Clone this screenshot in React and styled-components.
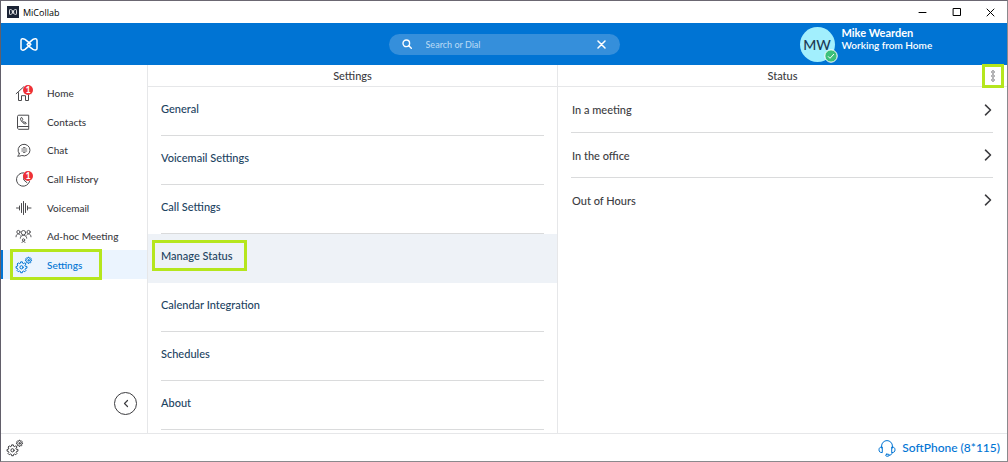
import React, { useState } from 'react';
import styled, { ThemeProvider, createGlobalStyle, css } from 'styled-components';

const theme = {
  blue: '#0074d4',
  blueSoft: '#358fdb',
  navy: '#1c435f',
  text: '#3c3c3f',
  icon: '#4a4a4d',
  line: '#e6e7e9',
  lineDark: '#dadbdc',
  lime: '#b5e61d',
  red: '#ee3136',
  selected: '#ebf4fe',
  selectedRow: '#eef2f7',
  font: 'Lato, "Open Sans", sans-serif',
};

const GlobalStyle = createGlobalStyle`
  body {
    margin: 0;
    font-family: ${theme.font};
    font-size: 11px;
    font-weight: 500;
    color: ${theme.text};
    background: #fff;
  }
  *, *::before, *::after {
    box-sizing: border-box;
  }
  button, input {
    font: inherit;
    color: inherit;
  }
  button {
    padding: 0;
    border: 0;
    background: none;
    cursor: pointer;
  }
`;

const Window = styled.div`
  display: flex;
  flex-direction: column;
  min-height: 100vh;
  border: 1px solid #8a898d;
  border-top-color: #6b6772;
  border-left-color: #625f6a;
`;

const TitleBar = styled.div`
  display: flex;
  align-items: center;
  height: 22px;
  padding-left: 6px;
  color: #000;
`;

const AppBadge = styled.span`
  display: flex;
  align-items: center;
  justify-content: center;
  width: 12px;
  height: 12px;
  margin-right: 4px;
  background: #1b2335;
`;

const WindowTitle = styled.span`
  flex: 1;
  font-family: "Open Sans", sans-serif;
  font-size: 9px;
`;

const WindowButton = styled.button`
  display: flex;
  align-items: center;
  justify-content: center;
  width: 34px;
  height: 22px;
`;

const Header = styled.header`
  display: grid;
  grid-template-columns: 1fr 231px 1fr;
  align-items: center;
  height: 42px;
  background: ${({ theme }) => theme.blue};
  color: #fff;
`;

const LogoLink = styled.a`
  display: flex;
  margin-left: 19px;
  color: #fff;
`;

const Search = styled.label`
  display: flex;
  align-items: center;
  height: 21px;
  padding: 0 14px 0 13px;
  border-radius: 11px;
  background: ${({ theme }) => theme.blueSoft};
`;

const SearchInput = styled.input`
  flex: 1;
  min-width: 0;
  margin-left: 14px;
  padding: 0;
  border: 0;
  outline: 0;
  background: none;
  font-size: 9px;

  &::placeholder {
    color: #b4d8f5;
    opacity: 1;
  }
`;

const ClearButton = styled.button`
  display: flex;
`;

const Profile = styled.div`
  display: flex;
  gap: 7px;
  margin-left: 180px;
`;

const Avatar = styled.div`
  position: relative;
  display: flex;
  align-items: center;
  justify-content: center;
  width: 35px;
  height: 35px;
  border-radius: 50%;
  background: #a2effd;
  color: #1c3a55;
  font-size: 14px;
`;

const Presence = styled.span`
  position: absolute;
  right: -3px;
  bottom: -1px;
  display: flex;
`;

const ProfileText = styled.div`
  display: flex;
  flex-direction: column;
  font-weight: 700;
`;

const ProfileName = styled.span`
  font-size: 11px;
  line-height: 12px;
`;

const ProfileStatus = styled.span`
  font-size: 10px;
  font-weight: 600;
  line-height: 12px;
`;

const Body = styled.div`
  flex: 1;
  display: grid;
  grid-template-columns: 147px 410px 1fr;
`;

const Sidebar = styled.aside`
  display: flex;
  flex-direction: column;
  border-right: 1px solid ${({ theme }) => theme.line};
`;

const Nav = styled.nav`
  display: flex;
  flex-direction: column;
  height: 200px;
  margin-top: 14px;
`;

const NavItem = styled.button`
  position: relative;
  flex: 1;
  display: flex;
  align-items: center;
  gap: 14px;
  padding-left: 12px;
  border-left: 2px solid transparent;
  font-size: 10px;
  text-align: left;

  ${({ $active, theme }) => $active && css`
    border-left-color: ${theme.blue};
    background: ${theme.selected};
    color: ${theme.blue};
  `}
`;

const NavIcon = styled.span`
  position: relative;
  display: flex;
  width: 18px;
  color: ${({ $active, theme }) => ($active ? theme.blue : theme.icon)};
`;

const Count = styled.span`
  position: absolute;
  top: 1px;
  right: 0;
  width: 10px;
  height: 10px;
  border-radius: 50%;
  background: ${({ theme }) => theme.red};
  color: #fff;
  font-size: 9px;
  font-weight: 700;
  line-height: 10px;
  text-align: center;
`;

const Highlight = styled.span`
  position: absolute;
  inset: ${({ $inset }) => $inset};
  border: 3px solid ${({ theme }) => theme.lime};
  pointer-events: none;
`;

const CollapseButton = styled.button`
  display: flex;
  align-items: center;
  justify-content: center;
  width: 23px;
  height: 23px;
  margin: auto 10px 18px auto;
  border: 1px solid #3c3c3f;
  border-radius: 50%;
`;

const Panel = styled.section`
  display: flex;
  flex-direction: column;
  border-right: ${({ $divider, theme }) => ($divider ? `1px solid ${theme.line}` : 0)};
`;

const PanelHeader = styled.div`
  position: relative;
  display: flex;
  align-items: center;
  justify-content: center;
  height: 22px;
  padding-bottom: 1px;
  border-bottom: 1px solid ${({ theme }) => theme.line};
`;

const PanelTitle = styled.h2`
  margin: 0;
  font-size: 11px;
  font-weight: 500;
`;

const MenuButton = styled.button`
  position: absolute;
  top: -1px;
  right: 3px;
  display: flex;
  align-items: center;
  justify-content: center;
  width: 22px;
  height: 24px;
  border: 3px solid ${({ theme }) => theme.lime};
`;

const SettingsRow = styled.button`
  display: flex;
  height: 49px;
  padding: 0 13px;
  color: ${({ theme }) => theme.navy};
  background: ${({ $active, theme }) => ($active ? theme.selectedRow : 'none')};
  text-align: left;
`;

const SettingsLabel = styled.span`
  flex: 1;
  display: flex;
  align-items: center;
  padding-bottom: 6px;
  border-bottom: 1px solid ${({ $active, theme }) => ($active ? 'transparent' : theme.lineDark)};
`;

const SettingsText = styled.span`
  position: relative;
`;

const StatusList = styled.div`
  display: flex;
  flex-direction: column;
  padding: 0 14px 0 13px;
`;

const StatusRow = styled.button`
  display: flex;
  align-items: center;
  justify-content: space-between;
  height: 45px;
  padding: 0 1px;
  text-align: left;

  & + & {
    border-top: 1px solid ${({ theme }) => theme.lineDark};
  }
`;

const Footer = styled.footer`
  display: flex;
  align-items: center;
  justify-content: space-between;
  height: 28px;
  padding: 0 7px 0 5px;
  border-top: 1px solid ${({ theme }) => theme.line};
`;

const FooterButton = styled.button`
  display: flex;
  align-items: center;
  gap: 6px;
`;

const SoftPhone = styled(FooterButton)`
  color: ${({ theme }) => theme.blue};
  font-size: 12px;
  font-weight: 500;
`;

// closed outline of a cog: a ring of flat teeth around (cx, cy)
function cog(cx, cy, outer, inner, teeth) {
  const step = (Math.PI * 2) / teeth;
  const points = [];
  for (let i = 0; i < teeth; i += 1) {
    const a = i * step;
    [[-0.3, inner], [-0.2, outer], [0.2, outer], [0.3, inner]].forEach(([k, r]) => {
      const x = cx + Math.cos(a + k * step) * r;
      const y = cy + Math.sin(a + k * step) * r;
      points.push(`${x.toFixed(2)} ${y.toFixed(2)}`);
    });
  }
  return `M${points.join('L')}Z`;
}

const Icon = ({ w = 18, h = 18, sw = 1, children }) => (
  <svg
    width={w}
    height={h}
    viewBox={`0 0 ${w} ${h}`}
    fill="none"
    stroke="currentColor"
    strokeWidth={sw}
    strokeLinecap="round"
    strokeLinejoin="round"
    aria-hidden="true"
  >
    {children}
  </svg>
);

const Bowtie = ({ w, h, sw, color = '#fff' }) => (
  <svg width={w} height={h} viewBox="0 0 18 13" fill="none" stroke={color} strokeWidth={sw} strokeLinejoin="round" strokeLinecap="round" aria-hidden="true">
    <path d="M9 4.600 5 1.400C3.200.5 1 .5 1 2.400v8.200c0 1.900 2.200 1.900 4 .8l5.800-5M9 8.400l4 3c1.800.9 4 .9 4-.8V2.400c0-1.900-2.200-1.900-4-1L7.200 6.400M7.200 6.400 9 8.400M9 4.600l1.800 1.800" />
  </svg>
);

const HomeIcon = () => (
  <Icon>
    <path d="M1.200 9.700 8.500 3l7.300 6.700M3.500 8.700v7.800h3v-4.800h4v4.800h3V8.700" />
  </Icon>
);

const ContactsIcon = () => (
  <Icon>
    <path d="M2.500 14.700V3.500c0-.8.5-1.300 1.300-1.300h9.900v11.300H3.800c-.8 0-1.300.5-1.300 1.200s.5 1.600 1.300 1.600h9.900v-2.800" />
    <path d="M5.900 4.800c-.6.600-.5 1.600.2 2.800.8 1.400 1.800 2.400 3 3 1.200.5 2 .3 2.300-.4l-1.500-1.300-.9.500c-.8-.5-1.400-1.200-1.800-2l.6-.9-.9-1.700z" />
  </Icon>
);

const ChatIcon = () => (
  <Icon>
    <path d="M4.200 12.600A6 5.800 0 1 1 6.800 14.500c-1.200.6-2.600.8-4.200.6 1-.5 1.500-1.300 1.600-2.500z" />
    <path d="M6.800 8h5M6.800 10h5M8.500 6.500h1.500M8.500 11.500h1.500" strokeWidth="0.800" />
  </Icon>
);

const HistoryIcon = () => (
  <Icon>
    <path d="M14.600 11.500A6.700 6.700 0 1 1 8.500 2.800M8.800 5.500v4.500l3.200 2.700" />
  </Icon>
);

const VoicemailIcon = () => (
  <Icon>
    <path d="M1.500 9h2M4.500 7v4M6.500 4.500v9M8.500 2.500v13M10.500 4.500v9M12.500 7v4M13.500 9h2.500" />
  </Icon>
);

const MeetingIcon = () => (
  <Icon sw={0.9}>
    <circle cx="8.500" cy="5.700" r="2.200" />
    <circle cx="3.400" cy="5" r="1.600" />
    <circle cx="13.600" cy="5" r="1.600" />
    <path d="M1 9.800c0-1.700.9-2.800 2.400-2.800 1 0 1.500.4 1.900 1.100M16 9.800c0-1.700-.9-2.800-2.400-2.800-1 0-1.500.4-1.900 1.100M5.300 11.200c0-1.800 1.200-2.800 3.200-2.800s3.200 1 3.200 2.800" />
    <circle cx="8.500" cy="13" r="1.200" />
    <path d="M7 15.500c.3-.7.800-1.100 1.500-1.100s1.200.4 1.500 1.100" />
  </Icon>
);

const CogsIcon = () => (
  <Icon>
    <path d={cog(6.500, 11.300, 5.500, 4.300, 8)} />
    <circle cx="6.500" cy="11.300" r="1.600" />
    <path d={cog(13.500, 4.300, 3.100, 2.300, 8)} />
    <circle cx="13.500" cy="4.300" r="0.700" />
  </Icon>
);

const HeadsetIcon = () => (
  <Icon w={18} h={18}>
    <path d="M3.600 9V7a5.400 5.400 0 0 1 10.800 0V9M3.900 8c-2 0-2.900 1-2.900 2.800s.9 2.800 2.900 2.800zM14.100 8c2 0 2.900 1 2.900 2.800s-.9 2.800-2.900 2.800zM14.100 13.600c0 1.900-1.200 2.600-3 2.600" />
    <rect x="7.700" y="15.200" width="3.400" height="2" rx="1" />
  </Icon>
);

const navItems = [
  { label: 'Home', icon: HomeIcon, count: 1 },
  { label: 'Contacts', icon: ContactsIcon },
  { label: 'Chat', icon: ChatIcon },
  { label: 'Call History', icon: HistoryIcon, count: 1 },
  { label: 'Voicemail', icon: VoicemailIcon },
  { label: 'Ad-hoc Meeting', icon: MeetingIcon },
  { label: 'Settings', icon: CogsIcon },
];

const settings = [
  'General',
  'Voicemail Settings',
  'Call Settings',
  'Manage Status',
  'Calendar Integration',
  'Schedules',
  'About',
];

const statuses = ['In a meeting', 'In the office', 'Out of Hours'];

function App() {
  const [page, setPage] = useState('Settings');
  const [setting, setSetting] = useState('Manage Status');
  const [query, setQuery] = useState('');

  return (
    <ThemeProvider theme={theme}>
      <GlobalStyle />
      <Window>
        <TitleBar>
          <AppBadge><Bowtie w={8} h={6} sw={2} /></AppBadge>
          <WindowTitle>MiCollab</WindowTitle>
          <WindowButton aria-label="Minimize">
            <Icon w={9} h={9}><path d="M1 4.500h7" /></Icon>
          </WindowButton>
          <WindowButton aria-label="Maximize">
            <Icon w={9} h={9}><rect x="1.500" y="0.500" width="7" height="7" /></Icon>
          </WindowButton>
          <WindowButton aria-label="Close">
            <Icon w={9} h={9}><path d="m1 1 7 7M8 1 1 8" /></Icon>
          </WindowButton>
        </TitleBar>
        <Header>
          <LogoLink href="#" aria-label="MiCollab"><Bowtie w={18} h={13} sw={1.5} /></LogoLink>
          <Search>
            <Icon w={10} h={10} sw={1.400}>
              <circle cx="4.300" cy="4.300" r="3.300" />
              <path d="m6.800 6.800 2.500 2.500" />
            </Icon>
            <SearchInput
              aria-label="Search or Dial"
              placeholder="Search or Dial"
              value={query}
              onChange={(e) => setQuery(e.target.value)}
            />
            <ClearButton aria-label="Clear" onClick={() => setQuery('')}>
              <Icon w={9} h={9} sw={1.500}><path d="m1 1 7 7M8 1 1 8" /></Icon>
            </ClearButton>
          </Search>
          <Profile>
            <Avatar>
              MW
              <Presence>
                <svg width="14" height="14" viewBox="0 0 14 14" aria-hidden="true">
                  <circle cx="7" cy="7" r="6.200" fill="#3cc079" stroke="#fff" />
                  <path d="m4 7.300 2 2 4-4.300" fill="none" stroke="#fff" />
                </svg>
              </Presence>
            </Avatar>
            <ProfileText>
              <ProfileName>Mike Wearden</ProfileName>
              <ProfileStatus>Working from Home</ProfileStatus>
            </ProfileText>
          </Profile>
        </Header>
        <Body>
          <Sidebar>
            <Nav>
              {navItems.map(({ label, icon: ItemIcon, count }) => (
                <NavItem key={label} $active={label === page} onClick={() => setPage(label)}>
                  <NavIcon $active={label === page}>
                    <ItemIcon />
                    {count && <Count>{count}</Count>}
                  </NavIcon>
                  {label}
                  {label === 'Settings' && <Highlight $inset="-1px 45px -1px 7px" />}
                </NavItem>
              ))}
            </Nav>
            <CollapseButton aria-label="Collapse menu">
              <Icon w={6} h={9} sw={1.200}><path d="M4.500 1.500 1.500 4.500l3 3" /></Icon>
            </CollapseButton>
          </Sidebar>
          <Panel $divider>
            <PanelHeader>
              <PanelTitle>Settings</PanelTitle>
            </PanelHeader>
            {settings.map((label) => (
              <SettingsRow key={label} $active={label === setting} onClick={() => setSetting(label)}>
                <SettingsLabel $active={label === setting}>
                  <SettingsText>
                    {label}
                    {label === 'Manage Status' && <Highlight $inset="-9px -14px -9px -9px" />}
                  </SettingsText>
                </SettingsLabel>
              </SettingsRow>
            ))}
          </Panel>
          <Panel>
            <PanelHeader>
              <PanelTitle>Status</PanelTitle>
              <MenuButton aria-label="More">
                <svg width="4" height="12" viewBox="0 0 4 12" fill="none" stroke="#77777a" strokeWidth="0.900" aria-hidden="true">
                  <circle cx="2" cy="2" r="1.300" />
                  <circle cx="2" cy="6" r="1.300" />
                  <circle cx="2" cy="10" r="1.300" />
                </svg>
              </MenuButton>
            </PanelHeader>
            <StatusList>
              {statuses.map((label) => (
                <StatusRow key={label}>
                  {label}
                  <Icon w={8} h={12} sw={1.600}><path d="m1.500 1.200 5 4.800-5 4.800" /></Icon>
                </StatusRow>
              ))}
            </StatusList>
          </Panel>
        </Body>
        <Footer>
          <FooterButton aria-label="Preferences"><CogsIcon /></FooterButton>
          <SoftPhone>
            <HeadsetIcon />
            SoftPhone (8*115)
          </SoftPhone>
        </Footer>
      </Window>
    </ThemeProvider>
  );
}

export default App;
